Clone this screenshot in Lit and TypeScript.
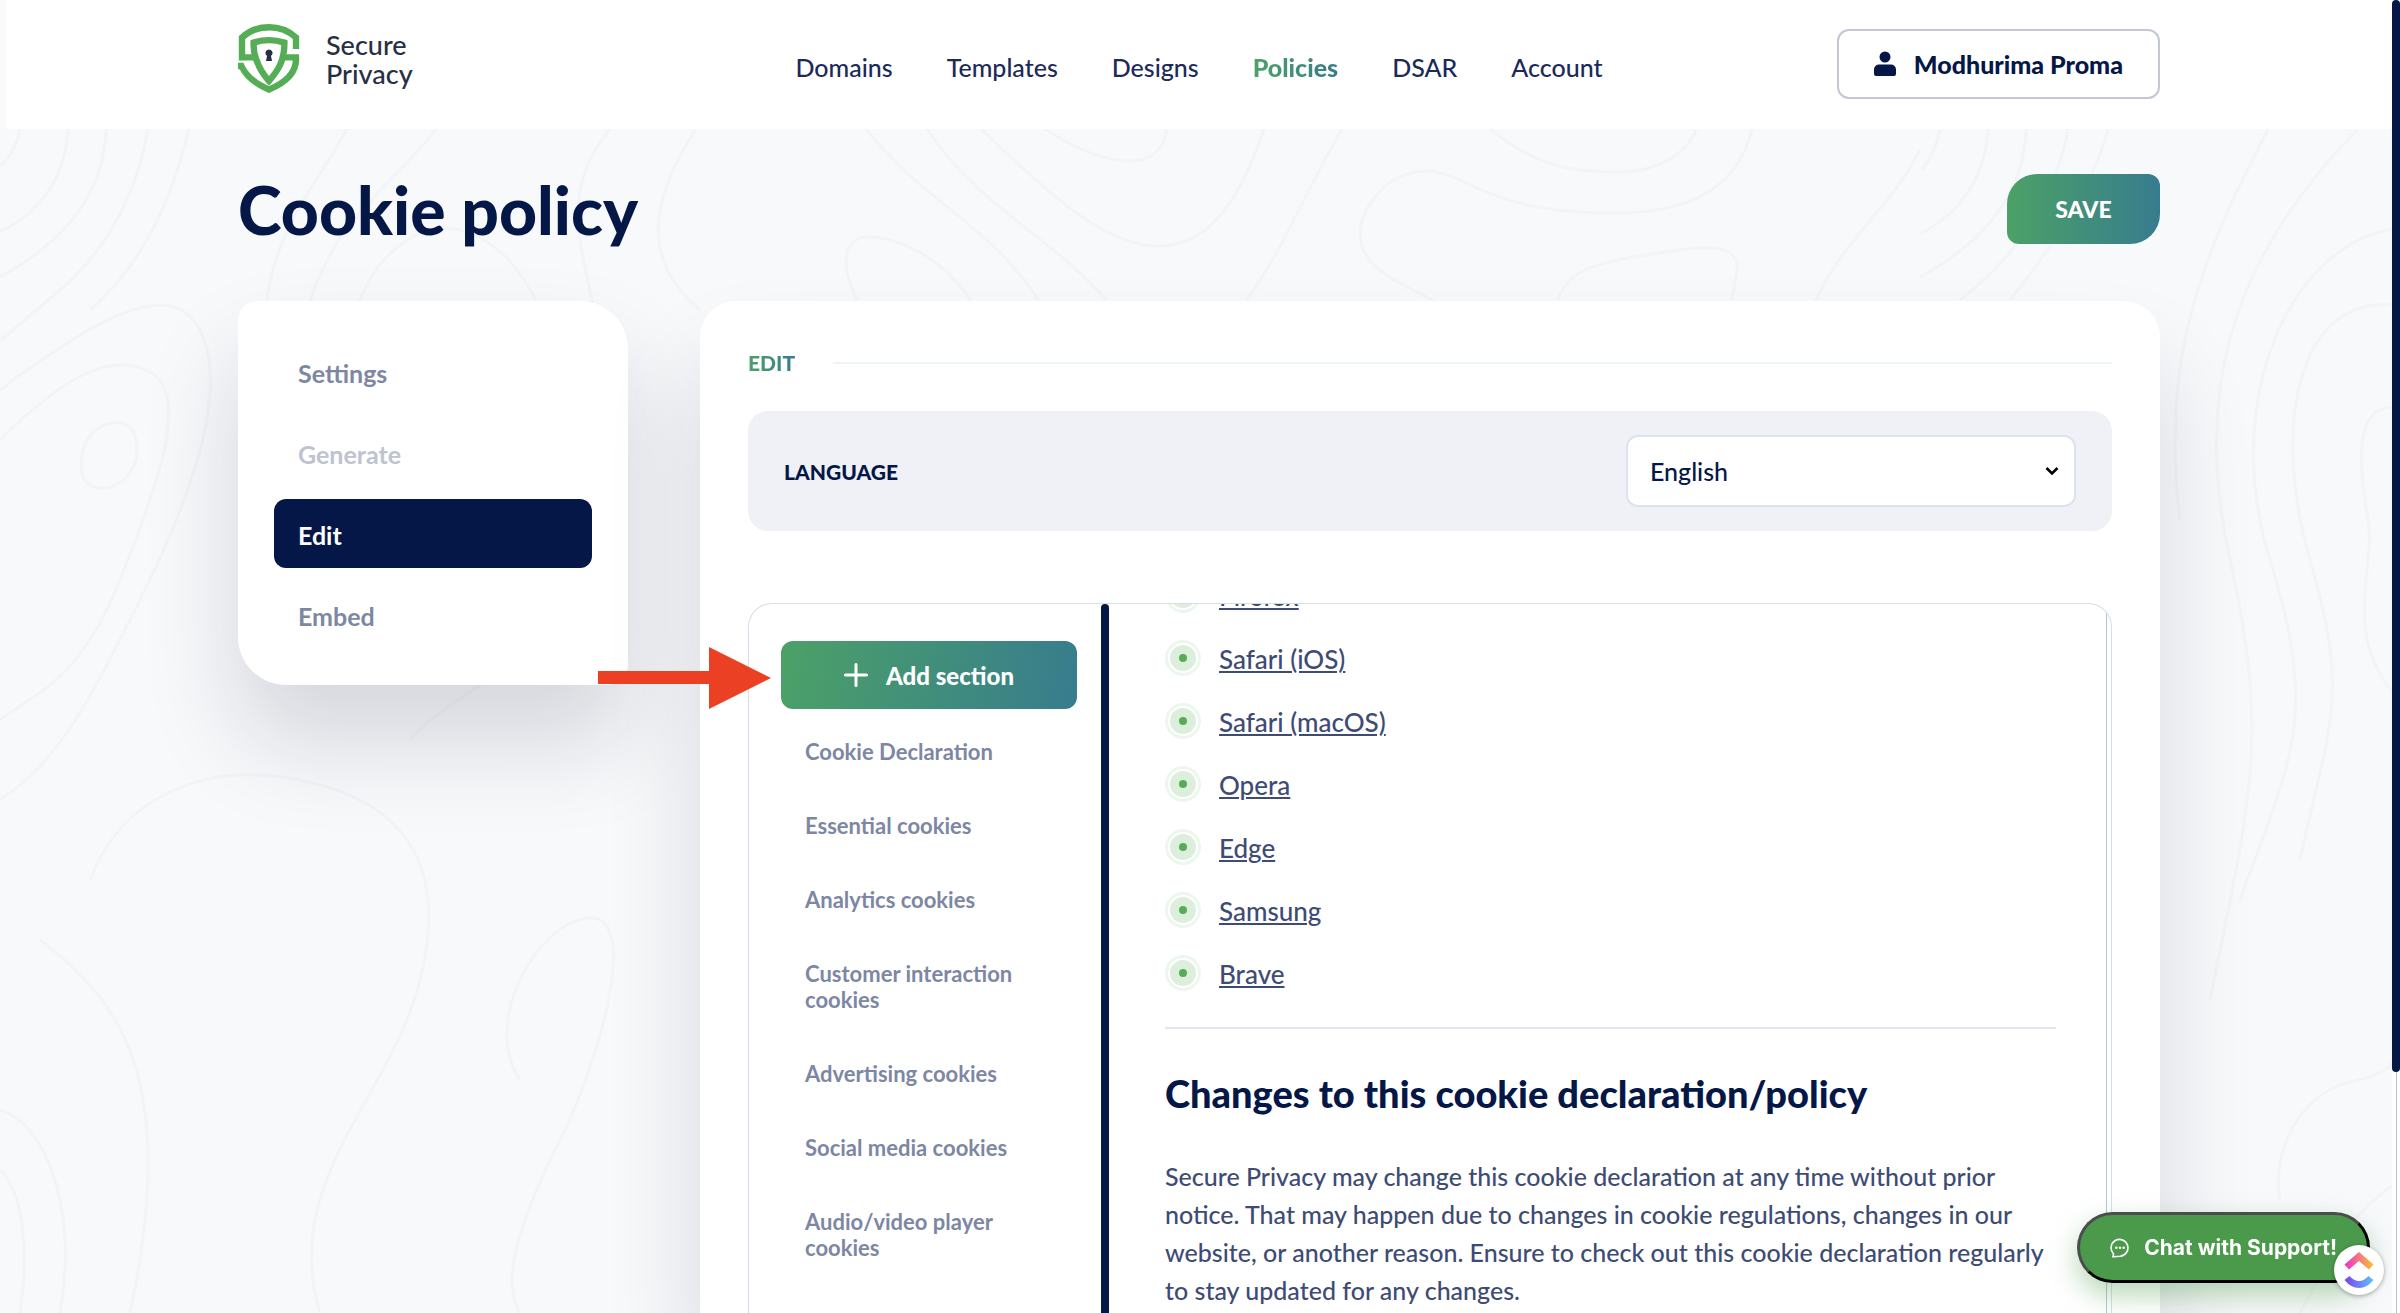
import { LitElement, html, svg, css } from "lit";
import { customElement, property } from "lit/decorators.js";
import { classMap } from "lit/directives/class-map.js";

const NAV = ["Domains", "Templates", "Designs", "Policies", "DSAR", "Account"];
const STEPS = [
  { label: "Settings", state: "" },
  { label: "Generate", state: "disabled" },
  { label: "Edit", state: "active" },
  { label: "Embed", state: "" },
];
const SECTIONS = [
  "Cookie Declaration",
  "Essential cookies",
  "Analytics cookies",
  "Customer interaction cookies",
  "Advertising cookies",
  "Social media cookies",
  "Audio/video player cookies",
];
const BROWSERS = ["Firefox", "Safari (iOS)", "Safari (macOS)", "Opera", "Edge", "Samsung", "Brave"];

const CONTOURS = [
  "M20 129 Q16 152 0 166",
  "M68 129 Q64 200 0 232",
  "M106 129 Q104 220 0 277",
  "M148 129 Q130 230 60 290 T0 340",
  "M189 129 Q160 250 90 310",
  "M436 129 C400 180 330 220 308 310",
  "M347 129 C320 180 272 230 266 310",
  "M356 310 C380 240 430 226 448 228 S510 240 540 310",
  "M610 129 C560 190 580 240 594 310",
  "M696 129 C650 200 640 260 700 310",
  "M866 129 C920 200 1000 230 1044 310",
  "M927 129 C980 210 1060 240 1114 310",
  "M981 129 C1060 205 1110 247 1160 246 S1240 200 1264 129",
  "M1045 129 C1100 165 1160 178 1167 129",
  "M1342 129 C1300 200 1290 240 1240 310",
  "M862 310 C840 270 840 238 868 237 S950 260 976 310",
  "M1450 310 C1400 280 1350 270 1362 220 C1380 175 1420 160 1460 180 S1540 214 1620 213 S1740 180 1752 129",
  "M1490 129 C1540 170 1580 172 1620 172 S1690 150 1696 129",
  "M1556 310 C1560 270 1600 262 1640 256 S1740 235 1737 270 L1730 310",
  "M1920 150 C1890 210 1840 240 1812 310",
  "M1940 129 Q1936 152 1922 170",
  "M1988 129 Q1984 200 1920 234",
  "M2026 129 Q2024 220 1920 277",
  "M2068 129 Q2050 230 1960 300",
  "M2108 129 Q2090 200 2010 300",
  "M2268 129 C2200 260 2160 360 2180 520",
  "M2358 129 C2240 250 2190 380 2230 560 S2250 800 2210 1000",
  "M2400 228 C2290 240 2220 400 2270 560 S2290 760 2240 900",
  "M2400 306 C2300 290 2270 420 2310 560 S2330 720 2300 860",
  "M2400 408 C2350 400 2360 470 2368 520 S2340 640 2400 700",
  "M0 390 C80 330 170 270 200 330 S190 500 140 600 S60 760 0 800",
  "M0 440 C60 380 110 350 150 372 S160 480 120 580 S40 690 0 720",
  "M82 456 C84 424 130 408 136 440 S116 492 98 488 S80 470 82 456",
  "M410 740 C440 700 560 650 620 560",
  "M520 1080 C480 1020 540 920 590 918 S600 1060 560 1140 S500 1280 520 1313",
  "M90 880 C120 800 200 760 300 780 S450 860 420 980 S280 1180 320 1313",
  "M0 1110 C40 1120 80 1200 60 1313",
  "M0 1170 C22 1190 30 1250 20 1313",
  "M40 940 C120 1000 180 1080 130 1313",
  "M2400 1180 C2340 1220 2330 1260 2300 1313",
  "M2280 1200 C2270 1140 2310 1090 2350 1082 S2400 1060 2400 1040",
];

const contourArt = html`
  <svg class="contours" viewBox="0 0 2400 1313" preserveAspectRatio="xMinYMin slice" aria-hidden="true">
    ${CONTOURS.map((d) => svg`<path d=${d} />`)}
  </svg>
`;

@customElement("site-header")
class SiteHeader extends LitElement {
  static styles = css`
    :host {
      display: block;
      background: #ffffff;
      padding: 0 232px;
    }
    .bar {
      display: grid;
      grid-template-columns: 1fr auto 1fr;
      align-items: center;
      height: 129px;
    }
    .brand {
      display: flex;
      align-items: center;
      gap: 26px;
      color: #262f44;
      font-size: 27px;
      font-weight: 500;
      line-height: 29px;
      text-decoration: none;
      padding-bottom: 12px;
    }
    .logo {
      width: 62px;
      height: 70px;
    }
    .nav {
      display: flex;
      gap: 54px;
      padding-top: 4px;
    }
    .link {
      color: #1b2a59;
      font-size: 25px;
      font-weight: 500;
      line-height: 32px;
      text-decoration: none;
    }
    .current {
      font-weight: 900;
      background: linear-gradient(90deg, #4ca167, #377c8e);
      -webkit-background-clip: text;
      background-clip: text;
      color: transparent;
    }
    .user {
      justify-self: end;
      display: flex;
      align-items: center;
      gap: 18px;
      height: 70px;
      margin-bottom: 2px;
      padding: 0 35px;
      border: 2px solid #c3c7d5;
      border-radius: 12px;
      background: #ffffff;
      color: #051747;
      font: inherit;
      font-size: 25px;
      font-weight: 900;
    }
    .avatar {
      width: 22px;
      height: 26px;
    }
  `;

  render() {
    return html`
      <header class="bar">
        <a class="brand" href="#home">
          <svg class="logo" viewBox="0 0 62 70" aria-hidden="true">
            <g fill="none" stroke="#55ae56" stroke-width="6.4">
              <path d="M58 25V13.500C51 7 41 3.200 31 3.200S11 7 4 13.500V33.400H18.500" />
              <path d="M18.500 36.600C15.600 29 15.400 24 15.600 18.600Q31 13.600 46.400 18.600C46.600 37 40 46.500 31 57Q22 47 18.500 36" />
              <path d="M43.500 33.400H58C59 48 49 58 31 65.600C18 60 8 52 3.400 42H0" stroke-linejoin="miter" />
            </g>
            <path fill="#262f44" d="M31 25.500a3.600 3.600 0 0 1 2 6.600l1 5h-6l1-5a3.600 3.600 0 0 1 2-6.600z" />
          </svg>
          <span>Secure<br />Privacy</span>
        </a>
        <nav class="nav" aria-label="Main">
          ${NAV.map(
            (name) => html`<a href="#${name.toLowerCase()}" class=${classMap({ link: true, current: name === "Policies" })}>${name}</a>`,
          )}
        </nav>
        <button class="user" type="button">
          <svg class="avatar" viewBox="0 0 22 26" aria-hidden="true">
            <circle cx="11" cy="6" r="5.500" fill="#051747" />
            <path fill="#051747" d="M5 13.500h12a5 5 0 0 1 5 5V23a2 2 0 0 1-2 2H2a2 2 0 0 1-2-2v-4.500a5 5 0 0 1 5-5z" />
          </svg>
          Modhurima Proma
        </button>
      </header>
    `;
  }
}

@customElement("step-menu")
class StepMenu extends LitElement {
  static styles = css`
    :host {
      display: block;
    }
    .card {
      display: flex;
      flex-direction: column;
      gap: 12px;
      padding: 36px;
      border-radius: 20px 48px 20px 48px;
      background: #ffffff;
      box-shadow: 0 56px 96px rgba(20, 22, 50, 0.15);
    }
    .step {
      display: block;
      padding: 20px 24px 17px;
      border-radius: 12px;
      color: #7d87a3;
      font-size: 25px;
      font-weight: 700;
      line-height: 32px;
      text-decoration: none;
    }
    .active {
      background: #051747;
      color: #ffffff;
    }
    .disabled {
      color: #bec3d1;
    }
  `;

  render() {
    return html`
      <nav class="card" aria-label="Policy steps">
        ${STEPS.map(
          (s) => html`<a
            href="#${s.label.toLowerCase()}"
            class=${classMap({ step: true, active: s.state === "active", disabled: s.state === "disabled" })}
            >${s.label}</a
          >`,
        )}
      </nav>
    `;
  }
}

@customElement("section-list")
class SectionList extends LitElement {
  static styles = css`
    :host {
      display: block;
      padding: 37px 24px 0 32px;
    }
    .add {
      display: flex;
      align-items: center;
      justify-content: center;
      gap: 18px;
      width: 100%;
      height: 68px;
      border: 0;
      border-radius: 12px;
      background: linear-gradient(100deg, #4ca167, #377c8e);
      color: #ffffff;
      font: inherit;
      font-size: 24px;
      font-weight: 900;
    }
    .plus {
      width: 24px;
      height: 24px;
    }
    .list {
      margin: 6px 0 0;
      padding: 0;
      list-style: none;
    }
    .item {
      display: block;
      padding: 24px;
      color: #7d87a3;
      font-size: 22px;
      font-weight: 700;
      line-height: 26px;
      text-decoration: none;
    }
  `;

  render() {
    return html`
      <button class="add" type="button">
        <svg class="plus" viewBox="0 0 24 24" aria-hidden="true">
          <path d="M12 1.500v21M1.500 12h21" stroke="#ffffff" stroke-width="3" stroke-linecap="round" />
        </svg>
        Add section
      </button>
      <ul class="list">
        ${SECTIONS.map((name) => html`<li><a class="item" href="#section">${name}</a></li>`)}
      </ul>
    `;
  }
}

@customElement("policy-preview")
class PolicyPreview extends LitElement {
  static styles = css`
    :host {
      display: block;
      overflow: hidden;
      padding: 0 50px 0 56px;
    }
    .browsers {
      display: flex;
      flex-direction: column;
      gap: 27px;
      margin: -27px 0 0;
      padding: 0;
      list-style: none;
    }
    .row {
      display: flex;
      align-items: flex-start;
      gap: 18px;
      height: 36px;
    }
    .dot {
      flex: none;
      width: 36px;
      height: 36px;
    }
    .link {
      color: #3e4b75;
      font-size: 26px;
      font-weight: 500;
      line-height: 38px;
      text-decoration: underline;
      text-decoration-thickness: 2px;
      text-underline-offset: 2px;
    }
    .rule {
      height: 2px;
      margin: 36px 0 0;
      border: 0;
      background: #e2e6ee;
    }
    .title {
      margin: 40px 0;
      color: #051747;
      font-size: 38px;
      font-weight: 900;
      line-height: 48px;
    }
    .text {
      margin: 0;
      color: #3e4b75;
      font-size: 25px;
      font-weight: 500;
      line-height: 38px;
    }
  `;

  render() {
    return html`
      <ul class="browsers">
        ${BROWSERS.map(
          (name) => html`
            <li class="row">
              <svg class="dot" viewBox="0 0 36 36" aria-hidden="true">
                <circle cx="18" cy="18" r="16.500" fill="#ffffff" stroke="#edf7ed" stroke-width="3" />
                <circle cx="18" cy="18" r="13" fill="#ddeedd" />
                <circle cx="18" cy="18" r="4" fill="#55ae56" />
              </svg>
              <a class="link" href="#browser">${name}</a>
            </li>
          `,
        )}
      </ul>
      <hr class="rule" />
      <h2 class="title">Changes to this cookie declaration/policy</h2>
      <p class="text">
        Secure Privacy may change this cookie declaration at any time without prior notice. That may happen due to
        changes in cookie regulations, changes in our website, or another reason. Ensure to check out this cookie
        declaration regularly to stay updated for any changes.
      </p>
    `;
  }
}

@customElement("policy-editor")
class PolicyEditor extends LitElement {
  @property() language = "English";

  static styles = css`
    :host {
      display: flex;
      flex-direction: column;
      padding: 48px 48px 0;
      border-radius: 36px 36px 0 0;
      background: #ffffff;
      box-shadow: 0 64px 96px rgba(20, 22, 50, 0.14);
    }
    .heading {
      display: flex;
      align-items: center;
      gap: 38px;
      margin-bottom: 35px;
    }
    .label {
      margin: 0;
      background: linear-gradient(90deg, #4ca167, #377c8e);
      -webkit-background-clip: text;
      background-clip: text;
      color: transparent;
      font-size: 21px;
      font-weight: 900;
      line-height: 27px;
    }
    .line {
      flex: 1;
      height: 2px;
      background: #edf4f4;
    }
    .language {
      display: flex;
      align-items: center;
      justify-content: space-between;
      padding: 24px 36px;
      border-radius: 20px;
      background: #f0f1f6;
    }
    .caption {
      color: #051747;
      font-size: 21px;
      font-weight: 900;
    }
    .field {
      position: relative;
      display: flex;
      width: 450px;
    }
    .select {
      appearance: none;
      width: 100%;
      height: 72px;
      padding: 0 22px;
      border: 2px solid #dce2ee;
      border-radius: 12px;
      background: #ffffff;
      color: #051747;
      font: inherit;
      font-size: 25px;
      font-weight: 500;
    }
    .chevron {
      position: absolute;
      right: 17px;
      top: 31px;
      width: 14px;
      height: 10px;
      pointer-events: none;
    }
    .workspace {
      display: grid;
      grid-template-columns: 352px 8px 1fr;
      flex: 1;
      min-height: 0;
      margin-top: 72px;
      border: 1px solid #d5deeb;
      border-bottom: 0;
      border-radius: 24px 24px 0 0;
      overflow: hidden;
    }
    .divider {
      border-radius: 4px 4px 0 0;
      background: #051747;
    }
    .preview {
      margin-right: 4px;
      border-right: 1px solid #b7c3d9;
    }
  `;

  render() {
    return html`
      <div class="heading">
        <h2 class="label">EDIT</h2>
        <div class="line"></div>
      </div>
      <div class="language">
        <label class="caption" for="language">LANGUAGE</label>
        <div class="field">
          <select class="select" id="language">
            <option>${this.language}</option>
          </select>
          <svg class="chevron" viewBox="0 0 14 10" aria-hidden="true">
            <path d="M1.500 2L7 7.500L12.500 2" fill="none" stroke="#000000" stroke-width="2.600" />
          </svg>
        </div>
      </div>
      <div class="workspace">
        <section-list></section-list>
        <div class="divider"></div>
        <policy-preview class="preview"></policy-preview>
      </div>
    `;
  }
}

@customElement("support-chat")
class SupportChat extends LitElement {
  static styles = css`
    .chat {
      position: fixed;
      right: 30px;
      bottom: 30px;
      display: flex;
      align-items: center;
      gap: 14px;
      height: 71px;
      padding: 0 30px;
      border: 3px solid #000000;
      border-color: #4c4c4c #000000 #000000 #4c4c4c;
      border-radius: 36px;
      background: #4b9a4b;
      box-shadow: 0 12px 28px rgba(75, 154, 75, 0.4);
      color: #ffffff;
      font-family: Inter, "Liberation Sans", sans-serif;
      font-size: 21px;
      font-weight: 700;
      white-space: nowrap;
    }
    .bubble {
      width: 20px;
      height: 20px;
    }
    .badge {
      position: fixed;
      right: 16px;
      bottom: 18px;
      display: grid;
      place-items: center;
      width: 50px;
      height: 50px;
      padding: 0;
      border: 0;
      border-radius: 50%;
      background: #ffffff;
      box-shadow: 0 1px 4px rgba(0, 0, 0, 0.35);
    }
    .mark {
      width: 30px;
      height: 38px;
    }
  `;

  render() {
    return html`
      <button class="chat" type="button">
        <svg class="bubble" viewBox="0 0 20 20" aria-hidden="true">
          <path
            d="M2.800 18.700c.7-1 .8-2 .5-3.200A8.400 8.400 0 1 1 10.200 18.200c-2.500 0-4.500.5-7.400.5z"
            fill="none"
            stroke="#ffffff"
            stroke-width="1.600"
            stroke-linejoin="round"
          />
          <g fill="#ffffff"><circle cx="6.300" cy="9.700" r="1.300" /><circle cx="10" cy="9.700" r="1.300" /><circle cx="13.700" cy="9.700" r="1.300" /></g>
        </svg>
        Chat with Support!
      </button>
      <button class="badge" type="button" aria-label="ClickUp">
        <svg class="mark" viewBox="0 0 30 38" aria-hidden="true">
          <defs>
            <linearGradient id="warm" x1="0" x2="1"><stop stop-color="#f02fd0" /><stop offset="1" stop-color="#fbc02d" /></linearGradient>
            <linearGradient id="cool" x1="0" x2="1"><stop stop-color="#7b3ff5" /><stop offset="1" stop-color="#5fc3fa" /></linearGradient>
          </defs>
          <path fill="url(#warm)" d="M15 1L29.500 13.500L25 18.500L15 10L5 18.500L.5 13.500z" />
          <path fill="url(#cool)" d="M.5 29L5.500 25Q10 30 15 30T24.500 25L29.500 29Q23 37 15 37T.5 29z" />
        </svg>
      </button>
    `;
  }
}

@customElement("app-root")
class AppRoot extends LitElement {
  static styles = css`
    :host {
      display: block;
      position: relative;
      height: 100vh;
      overflow: hidden;
      background: #f8f9fb;
      font-family: Lato, "Open Sans", sans-serif;
    }
    .contours {
      position: absolute;
      inset: 0;
      width: 100%;
      height: 100%;
      fill: none;
      stroke: #f3f4f7;
      stroke-width: 3;
    }
    .page {
      position: relative;
      display: flex;
      flex-direction: column;
      height: 100%;
      padding: 0 8px 0 6px;
      box-sizing: border-box;
    }
    .main {
      display: flex;
      flex: 1;
      flex-direction: column;
      min-height: 0;
      padding: 45px 232px 0;
    }
    .top {
      display: flex;
      align-items: flex-start;
      justify-content: space-between;
      margin-bottom: 55px;
    }
    .title {
      margin: 0;
      color: #051747;
      font-size: 66px;
      font-weight: 900;
      line-height: 72px;
    }
    .save {
      width: 153px;
      height: 70px;
      border: 0;
      border-radius: 30px 12px 30px 12px;
      background: linear-gradient(90deg, #4ca167, #377c8e);
      color: #ffffff;
      font: inherit;
      font-size: 23px;
      font-weight: 900;
    }
    .columns {
      display: grid;
      grid-template-columns: 390px 1fr;
      gap: 72px;
      align-items: start;
      flex: 1;
      min-height: 0;
    }
    .editor {
      align-self: stretch;
      min-height: 0;
    }
    .pointer {
      position: absolute;
      left: 598px;
      top: 647px;
      width: 173px;
      height: 62px;
    }
    .track {
      position: absolute;
      top: 0;
      right: 0;
      width: 8px;
      height: 100%;
      background: linear-gradient(90deg, #ffffff 4px, #b7c3d9 4px, #b7c3d9 5px, #ffffff 5px);
    }
    .thumb {
      height: calc(100% - 241px);
      border-radius: 4px;
      background: #051747;
    }
  `;

  render() {
    return html`
      ${contourArt}
      <div class="page">
        <site-header></site-header>
        <main class="main">
          <div class="top">
            <h1 class="title">Cookie policy</h1>
            <button class="save" type="button">SAVE</button>
          </div>
          <div class="columns">
            <step-menu></step-menu>
            <policy-editor class="editor"></policy-editor>
          </div>
        </main>
      </div>
      <svg class="pointer" viewBox="0 0 173 62" aria-hidden="true">
        <path fill="#eb4024" d="M0 24H111V0L173 31L111 62V37H0z" />
      </svg>
      <div class="track"><div class="thumb"></div></div>
      <support-chat></support-chat>
    `;
  }
}
